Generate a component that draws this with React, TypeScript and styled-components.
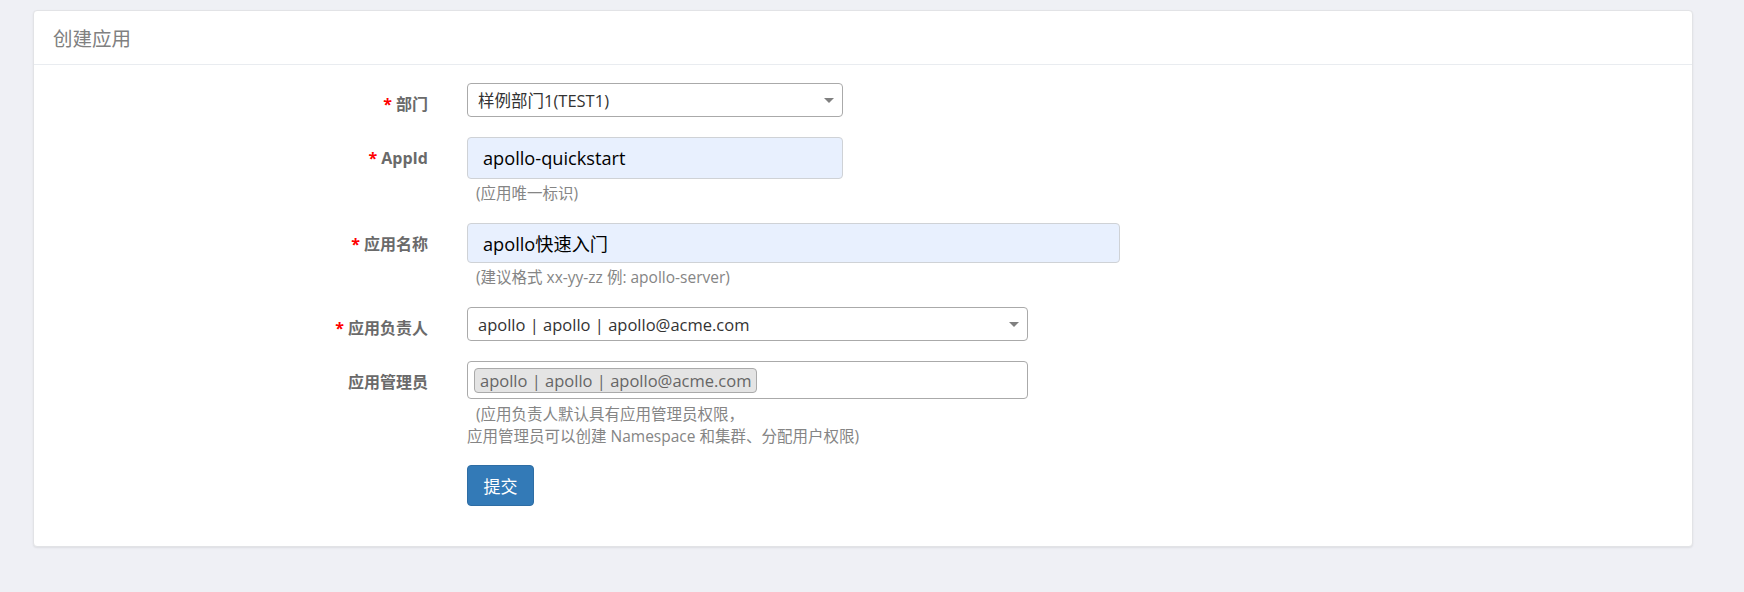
import styled, { createGlobalStyle } from 'styled-components'

const GlobalStyle = createGlobalStyle`
  html, body {
    margin: 0;
    padding: 0;
    background: #eff0f5;
    font-family: "Open Sans", "Noto Sans CJK SC", sans-serif;
  }
`

const Page = styled.div`
  min-height: 100vh;
  box-sizing: border-box;
  padding: 10px 51px 40px 33px;
`

const Panel = styled.section`
  background: #fff;
  border: 1px solid #e2e3e6;
  border-radius: 4px;
  box-shadow: 0 1px 2px rgba(0, 0, 0, 0.08);
`

const PanelHeader = styled.header`
  height: 53px;
  display: flex;
  align-items: center;
  padding: 0 19px;
  border-bottom: 1px solid #e9ecf0;
  font-size: 19.5px;
  color: #808080;
`

const PanelBody = styled.form`
  padding: 18px 0 40px;
`

const Row = styled.div<{ $gap?: number }>`
  display: grid;
  grid-template-columns: 394px 1fr;
  column-gap: 39px;
  align-items: start;
  margin-bottom: ${(p) => p.$gap ?? 20}px;
`

const Label = styled.label`
  text-align: right;
  padding-top: 11px;
  line-height: 20px;
  font-size: 16px;
  font-weight: bold;
  color: #6a6a6a;
`

const Star = styled.span`
  color: #f00;
  margin-right: 4px;
`

const Control = styled.div`
  display: flex;
  flex-direction: column;
  align-items: flex-start;
`

const Select = styled.div<{ $width: number }>`
  position: relative;
  box-sizing: border-box;
  width: ${(p) => p.$width}px;
  height: 34px;
  display: flex;
  align-items: center;
  padding: 0 30px 0 10px;
  border: 1px solid #aaa;
  border-radius: 4px;
  background: #fff;
  font-size: 16.5px;
  color: #333;
`

const Arrow = styled.span`
  position: absolute;
  right: 8px;
  top: 50%;
  margin-top: -2px;
  width: 0;
  height: 0;
  border-style: solid;
  border-width: 5px 5px 0 5px;
  border-color: #808080 transparent transparent transparent;
`

const Input = styled.input<{ $width: number; $height: number }>`
  box-sizing: border-box;
  width: ${(p) => p.$width}px;
  height: ${(p) => p.$height}px;
  padding: 0 15px;
  border: 1px solid #cfd2d6;
  border-radius: 4px;
  background: #e8f0fe;
  font-family: inherit;
  font-size: 18.2px;
  color: #000;
  outline: none;
`

const TagBox = styled.div`
  box-sizing: border-box;
  width: 561px;
  height: 38px;
  display: flex;
  align-items: center;
  padding: 0 6px;
  border: 1px solid #aaa;
  border-radius: 4px;
  background: #fff;
`

const Tag = styled.span`
  box-sizing: border-box;
  height: 25px;
  display: inline-flex;
  align-items: center;
  padding: 0 5px;
  border: 1px solid #aaa;
  border-radius: 4px;
  background: #e4e4e4;
  font-size: 16.5px;
  color: #666;
`

const Help = styled.small<{ $lineHeight?: number }>`
  display: block;
  margin-top: 4px;
  text-indent: 9px;
  font-size: 15.5px;
  line-height: ${(p) => p.$lineHeight ?? 20}px;
  color: #858585;
`

const SubmitButton = styled.button`
  box-sizing: border-box;
  width: 67px;
  height: 41px;
  padding: 0;
  border: 1px solid #2e6da4;
  border-radius: 4px;
  background: #337ab7;
  color: #fff;
  font-family: inherit;
  font-size: 17px;
  cursor: pointer;
`

export default function App() {
  return (
    <Page>
      <GlobalStyle />
      <Panel>
        <PanelHeader>创建应用</PanelHeader>
        <PanelBody onSubmit={(e) => e.preventDefault()}>
          <Row>
            <Label>
              <Star>*</Star>部门
            </Label>
            <Control>
              <Select $width={376}>
                样例部门1(TEST1)
                <Arrow />
              </Select>
            </Control>
          </Row>
          <Row>
            <Label>
              <Star>*</Star>AppId
            </Label>
            <Control>
              <Input $width={376} $height={42} value="apollo-quickstart" readOnly />
              <Help>(应用唯一标识)</Help>
            </Control>
          </Row>
          <Row>
            <Label>
              <Star>*</Star>应用名称
            </Label>
            <Control>
              <Input $width={653} $height={40} value="apollo快速入门" readOnly />
              <Help>(建议格式 xx-yy-zz 例: apollo-server)</Help>
            </Control>
          </Row>
          <Row $gap={20}>
            <Label>
              <Star>*</Star>应用负责人
            </Label>
            <Control>
              <Select $width={561}>
                apollo | apollo | apollo@acme.com
                <Arrow />
              </Select>
            </Control>
          </Row>
          <Row $gap={18}>
            <Label>应用管理员</Label>
            <Control>
              <TagBox>
                <Tag>apollo | apollo | apollo@acme.com</Tag>
              </TagBox>
              <Help $lineHeight={22}>
                (应用负责人默认具有应用管理员权限，
                <br />
                应用管理员可以创建 Namespace 和集群、分配用户权限)
              </Help>
            </Control>
          </Row>
          <Row $gap={0}>
            <span />
            <Control>
              <SubmitButton type="submit">提交</SubmitButton>
            </Control>
          </Row>
        </PanelBody>
      </Panel>
    </Page>
  )
}
